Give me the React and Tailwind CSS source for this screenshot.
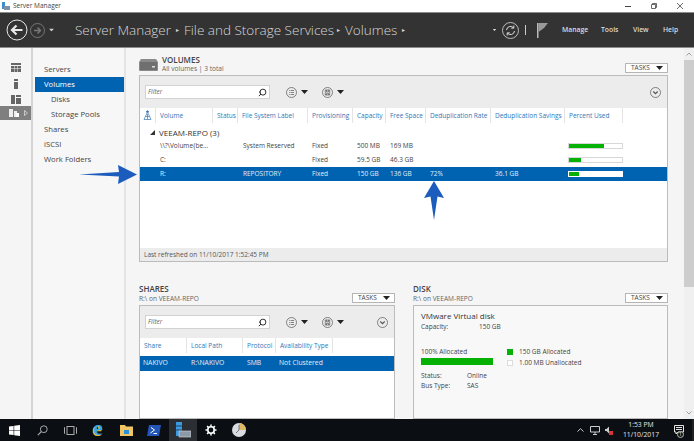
import { Search } from "lucide-react";

const FONT = { fontFamily: '"Open Sans", "Noto Sans", sans-serif' };
const VOL_COLS = "grid-cols-[16px_57px_25px_70px_45px_33px_40px_65px_74px_58px_1fr]";
const SHARE_COLS = "grid-cols-[47px_56px_33px_57px_1fr]";

const Tri = ({ className = "" }) => (
  <svg width="7" height="4" viewBox="0 0 7 4" className={className}><path d="M0 0h7L3.5 4z" fill="currentColor" /></svg>
);

function CircleBtn({ kind }) {
  return (
    <svg width="11" height="11" viewBox="0 0 11 11" fill="none" stroke="#555" strokeWidth="0.7">
      <circle cx="5.5" cy="5.5" r="5" />
      {kind === "list" && <path d="M3 3.5h.8M4.6 3.5h3.4M3 5.5h.8M4.6 5.5h3.4M3 7.5h.8M4.6 7.5h3.4" />}
      {kind === "save" && <path d="M3.3 3h4.4v5H3.300zM4.500 3v1.800h2V3M4.500 8V6.300h2V8" />}
      {kind === "down" && <path d="M3.300 4.500l2.200 2.200 2.200-2.200" strokeWidth="1.200" />}
    </svg>
  );
}

function Tasks() {
  return (
    <div className="w-[43px] h-[10px] border border-[#b5b5b5] bg-white flex items-center justify-between pl-[5px] pr-[4px] text-[6.5px] text-[#444] leading-none">
      TASKS <Tri className="text-[#222]" />
    </div>
  );
}

function Toolbar() {
  return (
    <div className="h-[32px] bg-[#ececec] flex items-center pl-[5px] pr-[6px] shrink-0">
      <div className="w-[125px] h-[14px] bg-white border border-[#d2d2d2] flex items-center justify-between px-[2px] text-[6.5px] italic text-[#666]">
        Filter <Search size={9} strokeWidth={2.5} className="text-[#222] -scale-x-100" />
      </div>
      <div className="flex items-center gap-[4px] ml-[16px] text-[#222]"><CircleBtn kind="list" /><Tri /></div>
      <div className="flex items-center gap-[4px] ml-[14px] text-[#222]"><CircleBtn kind="save" /><Tri /></div>
      <div className="ml-auto"><CircleBtn kind="down" /></div>
    </div>
  );
}

function HeadCell({ children }) {
  return <div className="pl-[4px] border-r border-[#e4e4e4] text-[#2f78b7] text-[6.5px] leading-[15px] whitespace-nowrap overflow-hidden">{children}</div>;
}

function Bar({ fill, selected }) {
  return (
    <div className={`h-[6px] w-[55px] -ml-[1px] border ${selected ? "border-white bg-white" : "border-[#d8d8d8] bg-white"}`}>
      <div className="h-full bg-[#06b106]" style={{ width: fill }} />
    </div>
  );
}

function VolumeRow({ r, selected }) {
  const color = selected ? "text-[#e4eef7]" : "text-[#444]";
  return (
    <div className={`grid ${VOL_COLS} items-center text-[6.5px] ${color} ${selected ? "h-[14px] bg-[#0063b1]" : "h-[13.8px]"}`}>
      <div />
      <div className="pl-[4px] whitespace-nowrap">{r.name}</div>
      <div />
      <div className="pl-[5px] whitespace-nowrap">{r.label}</div>
      <div className="pl-[4px]">Fixed</div>
      <div className="pl-[4px] whitespace-nowrap">{r.cap}</div>
      <div className="pl-[4px] whitespace-nowrap">{r.free}</div>
      <div className="pl-[4px]">{r.rate}</div>
      <div className="pl-[4px]">{r.sav}</div>
      <div className="pl-[4px]"><Bar fill={r.fill} selected={selected} /></div>
    </div>
  );
}

function VolumeIcon() {
  return (
    <svg width="19" height="13" viewBox="0 0 19 13">
      <path d="M2 1h15l2 3v8a1 1 0 0 1-1 1H1a1 1 0 0 1-1-1V4z" fill="#8a8a8a" />
      <rect x="1" y="4" width="17" height="8" fill="#6f6f6f" />
      <rect x="13" y="8" width="3" height="1.5" fill="#ddd" />
    </svg>
  );
}

function RailIcons() {
  return (
    <div className="w-[31px] shrink-0 bg-[#f5f5f5] flex flex-col pt-[11px] text-[#666]">
      <div className="h-[16px] flex items-center justify-center">
        <svg width="10" height="9" viewBox="0 0 10 9"><path d="M0 0h10v2H0zM0 3h3v2.5H0zM3.500 3H6.500v2.500h-3zM7 3h3v2.500H7zM0 6h3v3H0zM3.500 6h3v3h-3zM7 6h3v3H7z" fill="currentColor" /></svg>
      </div>
      <div className="h-[17px] flex items-center justify-center">
        <svg width="4" height="10" viewBox="0 0 4 10"><path d="M0 0h4v2H0zM0 3h4v7H0z" fill="currentColor" /></svg>
      </div>
      <div className="h-[14px] flex items-center justify-center">
        <svg width="10" height="9" viewBox="0 0 10 9"><path d="M0 0h4v9H0zM5 3h5v6H5zM5 0h5v2H5z" fill="currentColor" /></svg>
      </div>
      <div className="h-[14px] bg-[#7f7f7f] flex items-center pl-[9px] gap-[5px]">
        <svg width="10" height="8" viewBox="0 0 10 8"><path d="M0 0h4v8H0zM5 2h3v6H5z" fill="#eee" /><path d="M7 4h3v4H7z" fill="#fff" /></svg>
        <svg width="4" height="6" viewBox="0 0 4 6" fill="none" stroke="#ddd" strokeWidth="0.8"><path d="M.5.5l3 2.500-3 2.500z" /></svg>
      </div>
    </div>
  );
}

function Nav() {
  const items = [
    ["Servers", "pl-[11px]"],
    ["Volumes", "pl-[9px] bg-[#0063b1] text-white ml-[2px]"],
    ["Disks", "pl-[18px]"],
    ["Storage Pools", "pl-[18px]"],
    ["Shares", "pl-[11px]"],
    ["iSCSI", "pl-[11px]"],
    ["Work Folders", "pl-[11px]"],
  ];
  return (
    <div className="w-[95px] shrink-0 border-l-2 border-r-2 border-l-[#d4d4d4] border-r-[#e4e4e4] bg-[#f7f7f7] pt-[14px] text-[7.7px] text-[#444]">
      {items.map(([t, c]) => (
        <div key={t} className={`h-[15px] leading-[15px] ${c}`}>{t}</div>
      ))}
    </div>
  );
}

function Scrollbar() {
  return (
    <div className="w-[10px] shrink-0 bg-[#f0f0f0] flex flex-col items-center">
      <div className="h-[12px] flex items-center">
        <svg width="6" height="4" viewBox="0 0 6 4" fill="none" stroke="#a0a0a0"><path d="M.5 3.500L3 1l2.500 2.500" /></svg>
      </div>
      <div className="h-[227px] w-full bg-[#cdcdcd]" />
      <div className="mt-auto h-[12px] flex items-center">
        <svg width="6" height="4" viewBox="0 0 6 4" fill="none" stroke="#a0a0a0"><path d="M.5.5L3 3l2.500-2.500" /></svg>
      </div>
    </div>
  );
}

function VolumesPanel() {
  const rows = [
    { name: "\\\\?\\Volume{be...", label: "System Reserved", cap: "500 MB", free: "169 MB", fill: "66%" },
    { name: "C:", cap: "59.5 GB", free: "46.3 GB", fill: "22%" },
  ];
  return (
    <div className="h-[187px] border border-[#bcbcbc] bg-white flex flex-col">
      <Toolbar />
      <div className={`grid ${VOL_COLS} shrink-0`}>
        <HeadCell>
          <svg width="9" height="10" viewBox="0 0 9 10" fill="none" stroke="#3a7ab5" strokeWidth="0.7" className="-ml-[1px] mt-[2px]">
            <path d="M4.500 2L1 9.500h7zM4.500 4v5.500M2.500 6.500h4" /><path d="M3 2l1.500-1.500L6 2z" fill="#3a7ab5" />
          </svg>
        </HeadCell>
        {["Volume", "Status", "File System Label", "Provisioning", "Capacity", "Free Space", "Deduplication Rate", "Deduplication Savings", "Percent Used"].map(h => (
          <HeadCell key={h}>{h}</HeadCell>
        ))}
      </div>
      <div className="h-[16px] flex items-center pl-[10px] gap-[4px] text-[8px] text-[#333] pt-[3px]">
        <svg width="5" height="5" viewBox="0 0 5 5"><path d="M5 0v5H0z" fill="#333" /></svg>
        VEEAM-REPO (3)
      </div>
      {rows.map(r => <VolumeRow key={r.name} r={r} />)}
      <VolumeRow selected r={{ name: "R:", label: "REPOSITORY", cap: "150 GB", free: "136 GB", rate: "72%", sav: "36.1 GB", fill: "18%" }} />
      <div className="mt-auto h-[13px] bg-[#ececec] px-[4px] text-[6.5px] leading-[13px] text-[#555]">Last refreshed on 11/10/2017 1:52:45 PM</div>
    </div>
  );
}

function SharesPanel() {
  return (
    <div className="w-[256px] h-[114px] border border-[#bcbcbc] bg-white">
      <Toolbar />
      <div className={`grid ${SHARE_COLS} h-[18px] items-start`}>
        {["Share", "Local Path", "Protocol", "Availability Type"].map(h => <HeadCell key={h}>{h}</HeadCell>)}
      </div>
      <div className={`grid ${SHARE_COLS} h-[14.5px] items-center bg-[#0063b1] text-[#e4eef7] text-[6.8px]`}>
        <div className="pl-[3px]">NAKIVO</div>
        <div className="pl-[4px]">R:\NAKIVO</div>
        <div className="pl-[4px]">SMB</div>
        <div className="pl-[3px] whitespace-nowrap">Not Clustered</div>
      </div>
    </div>
  );
}

function DiskPanel() {
  return (
    <div className="w-[255px] h-[114px] border border-[#bcbcbc] bg-[#f8f8f8] pl-[7px] pt-[4px] text-[6.5px] text-[#444]">
      <div className="text-[8px] leading-[12px] text-[#333]">VMware Virtual disk</div>
      <div className="flex leading-[9px]">
        <div className="w-[58px]">Capacity:</div><div>150 GB</div>
      </div>
      <div className="flex mt-[16px]">
        <div className="w-[86px]">
          <div className="leading-[10px]">100% Allocated</div>
          <div className="h-[7px] w-[72px] bg-[#06b106] mt-[1px]" />
          <div className="flex leading-[10px] mt-[6px]"><div className="w-[46px]">Status:</div>Online</div>
          <div className="flex leading-[10px]"><div className="w-[46px]">Bus Type:</div>SAS</div>
        </div>
        <div className="leading-[11px] -mt-[1px]">
          <div className="flex items-center gap-[6px]"><div className="w-[6px] h-[6px] bg-[#06b106]" />150 GB Allocated</div>
          <div className="flex items-center gap-[6px]"><div className="w-[6px] h-[6px] bg-white border border-[#ddd]" />1.00 MB Unallocated</div>
        </div>
      </div>
    </div>
  );
}

function SectionHead({ title, sub }) {
  return (
    <div className="flex items-end justify-between mb-[1px]">
      <div>
        <div className="text-[8px] font-semibold leading-[10px] text-[#444]">{title}</div>
        <div className="text-[6.6px] leading-[10px] text-[#666]">{sub}</div>
      </div>
      <div className="mb-[1px]"><Tasks /></div>
    </div>
  );
}

function Header() {
  return (
    <div className="h-[36px] shrink-0 bg-[#333] border-y border-[#8c8c8c] flex items-center text-[#d8d8d8]">
      <svg width="22" height="22" viewBox="0 0 22 22" fill="none" stroke="#e8e8e8" className="ml-[6px]">
        <circle cx="11" cy="11" r="10" strokeWidth="1" />
        <path d="M16.500 11H6.500M10.500 6.500L6 11l4.500 4.500" strokeWidth="2.200" />
      </svg>
      <svg width="15" height="15" viewBox="0 0 15 15" fill="none" stroke="#777" className="ml-[2px]">
        <circle cx="7.500" cy="7.500" r="7" />
        <path d="M4 7.500h6.500M7.500 4.500l3 3-3 3" strokeWidth="1.500" />
      </svg>
      <Tri className="ml-[3px] text-[#ccc] scale-75" />
      <div className="flex items-center ml-[20px] text-[13.5px] font-light whitespace-nowrap">
        <span className="w-[101px]">Server Manager</span>
        <span className="w-[8px] text-[6px]">▸</span>
        <span className="w-[153px]">File and Storage Services</span>
        <span className="w-[8px] text-[6px]">▸</span>
        <span className="w-[57px]">Volumes</span>
        <span className="text-[6px]">▸</span>
      </div>
      <Tri className="ml-auto text-[#ddd] scale-50" />
      <svg width="17" height="17" viewBox="0 0 17 17" fill="none" stroke="#ddd" className="ml-[4px]">
        <circle cx="8.500" cy="8.500" r="8" strokeWidth="0.8" />
        <path d="M4.500 8a4 4 0 0 1 7-2.200M12.500 9a4 4 0 0 1-7 2.200M11.800 3.500v2.600H9.200M5.200 13.500v-2.600h2.600" strokeWidth="1" />
      </svg>
      <div className="w-px h-[10px] bg-[#ccc] ml-[6px]" />
      <svg width="11" height="15" viewBox="0 0 11 15" className="ml-[11px]">
        <path d="M0 0h1.500v15H0z" fill="#bbb" /><path d="M1.500 0H11L7 5 1.500 9z" fill="#999" />
      </svg>
      <div className="flex text-[6.8px] font-semibold text-[#dcdcdc] ml-[14px] mr-[16px]">
        <span className="w-[39px]">Manage</span><span className="w-[32px]">Tools</span><span className="w-[30px]">View</span><span className="w-[15px]">Help</span>
      </div>
    </div>
  );
}

function TaskbarIcons() {
  const cell = "w-[28px] h-full flex items-center justify-center";
  return (
    <div className="flex h-full">
      <div className={cell}>
        <svg width="11" height="11" viewBox="0 0 11 11"><path d="M0 1.600l4.600-.7v4.300H0zM5.200.8L11 0v5.200H5.200zM0 5.800h4.600v4.300L0 9.400zM5.200 5.800H11V11l-5.800-.8z" fill="#fff" /></svg>
      </div>
      <div className={cell}>
        <svg width="11" height="11" viewBox="0 0 11 11" fill="none" stroke="#aaa"><circle cx="6.800" cy="4.200" r="3.400" /><path d="M4.300 6.700L.8 10.200" strokeWidth="1.200" /></svg>
      </div>
      <div className={cell}>
        <svg width="13" height="9" viewBox="0 0 13 9" fill="none" stroke="#aaa"><rect x="3" y=".5" width="7" height="8" /><path d="M1 1.500h-.5v6H1M12 1.500h.5v6H12" /></svg>
      </div>
      <div className={cell}>
        <span className="text-[22px] leading-none font-bold text-[#35a7e8] -mt-[4px] [text-shadow:-1px_1px_0_#e6b422]" style={{ fontFamily: '"Liberation Serif", serif' }}>e</span>
      </div>
      <div className={cell}>
        <svg width="13" height="11" viewBox="0 0 13 11"><path d="M0 0h5l1 1.500h7V11H0z" fill="#f0c565" /><rect x="4" y="5" width="5" height="4" fill="#2c8fd6" /></svg>
      </div>
      <div className={cell}>
        <svg width="14" height="11" viewBox="0 0 14 11"><path d="M2 0h12l-2 11H0z" fill="#2456b8" /><path d="M4 2.500L7.500 5 3.500 8M6.500 8.500h3.500" fill="none" stroke="#fff" /></svg>
      </div>
      <div className="w-[28px] ml-[1px] h-full flex items-center justify-center bg-[#2b2f33]">
        <svg width="15" height="16" viewBox="0 0 15 16"><rect x="0" y="0" width="6" height="14" fill="#3b9be0" /><path d="M0 4h6M0 8h6" stroke="#0d1015" strokeWidth="0.6" /><rect x="3" y="9" width="12" height="6" fill="#8d99a6" stroke="#cfd6dc" strokeWidth="0.6" /></svg>
      </div>
      <div className={cell}>
        <svg width="12" height="12" viewBox="0 0 12 12" fill="none"><circle cx="6" cy="6" r="3.200" stroke="#fff" strokeWidth="1.600" /><path d="M6 .5v2M6 9.500v2M.5 6h2M9.500 6h2M2.100 2.100l1.400 1.400M8.500 8.500l1.400 1.400M2.100 9.900l1.400-1.400M8.500 3.500l1.400-1.400" stroke="#fff" strokeWidth="1.500" /></svg>
      </div>
      <div className={cell}>
        <svg width="14" height="14" viewBox="0 0 14 14"><circle cx="7" cy="7" r="7" fill="#d9dde2" /><path d="M7 7V0a7 7 0 0 1 7 7z" fill="#e0b866" /><path d="M7 2v5l-3 3" fill="none" stroke="#777" /></svg>
      </div>
    </div>
  );
}

function Tray() {
  return (
    <div className="ml-auto h-full flex items-center text-[#ddd]">
      <svg width="7" height="4" viewBox="0 0 7 4" fill="none" stroke="#ccc"><path d="M.5 3.500L3.500.7l3 2.800" /></svg>
      <svg width="10" height="9" viewBox="0 0 10 9" fill="none" stroke="#ccc" className="ml-[6px]"><path d="M.5.5h9v5.500h-9zM3 8.500h4M5 6v2.500" /></svg>
      <div className="relative ml-[5px] w-[8px] h-[9px]">
        <svg width="5" height="8" viewBox="0 0 5 8"><path d="M0 3h1.500L4 .5v7L1.500 5H0z" fill="#ccc" /></svg>
        <div className="absolute right-0 bottom-0 w-[4px] h-[4px] bg-[#d8343a]" />
      </div>
      <div className="w-[48px] ml-[4px] text-center text-[6.8px] leading-[10.5px] text-[#e4e4e4]">
        <div>1:53 PM</div>
        <div>11/10/2017</div>
      </div>
      <div className="relative w-[26px] h-full flex items-center justify-center ml-[1px]">
        <svg width="10" height="10" viewBox="0 0 10 10" fill="none" stroke="#e4e4e4"><path d="M.5.5h9v6.500H4L2 9V7H.5zM2 2.500h6M2 4.500h6" /></svg>
        <span className="absolute right-[8px] bottom-[3px] w-[7px] h-[7px] rounded-full bg-[#111] border border-[#bbb] text-[5px] leading-[5px] text-center text-white">1</span>
      </div>
      <div className="w-[2px] h-full bg-[#222]" />
    </div>
  );
}

export default function App() {
  return (
    <div className="relative w-[694px] h-[441px] overflow-hidden bg-[#f5f5f5] flex flex-col" style={FONT}>
      {/* Title bar */}
      <div className="h-[12px] shrink-0 bg-white flex items-center text-[#444]">
        <svg width="8" height="8" viewBox="0 0 8 8" className="ml-[2px]"><rect width="3" height="7" fill="#3b8fd6" /><rect x="2" y="4" width="6" height="4" fill="#7f93a8" /></svg>
        <span className="ml-[3px] text-[6.5px]">Server Manager</span>
        <div className="ml-auto flex items-center gap-[20px] mr-[11px]">
          <div className="w-[6px] h-px bg-[#444]" />
          <svg width="6" height="6" viewBox="0 0 6 6" fill="none" stroke="#444" strokeWidth="0.8"><path d="M.5 1.500h4v4h-4zM1.500 1.500V.5h4v4h-1" /></svg>
          <svg width="6" height="6" viewBox="0 0 6 6" stroke="#444" strokeWidth="0.8"><path d="M0 0l6 6M6 0L0 6" /></svg>
        </div>
      </div>

      <Header />

      {/* Body */}
      <div className="flex-1 min-h-0 flex">
        <RailIcons />
        <Nav />
        <div className="flex-1 min-w-0 overflow-hidden pl-[13px] pr-[16px] pt-[7px] bg-[#f5f5f5]">
          <div className="flex items-end justify-between h-[18px]">
            <div className="flex items-center gap-[4px] self-start">
              <VolumeIcon />
              <div>
                <div className="text-[8px] font-semibold leading-[9px] text-[#444]">VOLUMES</div>
                <div className="text-[6.6px] leading-[10px] text-[#666]">All volumes | 3 total</div>
              </div>
            </div>
            <Tasks />
          </div>
          <div className="mt-[2px]"><VolumesPanel /></div>
          <div className="flex justify-between mt-[22px]">
            <div className="w-[256px]">
              <SectionHead title="SHARES" sub="R:\ on VEEAM-REPO" />
              <SharesPanel />
            </div>
            <div className="w-[255px]">
              <SectionHead title="DISK" sub="R:\ on VEEAM-REPO" />
              <DiskPanel />
            </div>
          </div>
        </div>
        <Scrollbar />
      </div>

      {/* Taskbar */}
      <div className="h-[22px] shrink-0 bg-[#0b0f14] flex items-center relative">
        <TaskbarIcons />
        <Tray />
      </div>

      {/* Annotation arrows */}
      <svg className="absolute left-[79px] top-[164px]" width="59" height="21" viewBox="0 0 59 21">
        <path d="M0 10.500L40 8 39 1 58 10.500 39 20 40 12.500z" fill="#1c5cbc" />
      </svg>
      <svg className="absolute left-[424px] top-[181px]" width="20" height="40" viewBox="0 0 20 40">
        <path d="M10 0L20 17 13.500 15.500 10 39 6.500 15.500 0 17z" fill="#1c5cbc" />
      </svg>
    </div>
  );
}
